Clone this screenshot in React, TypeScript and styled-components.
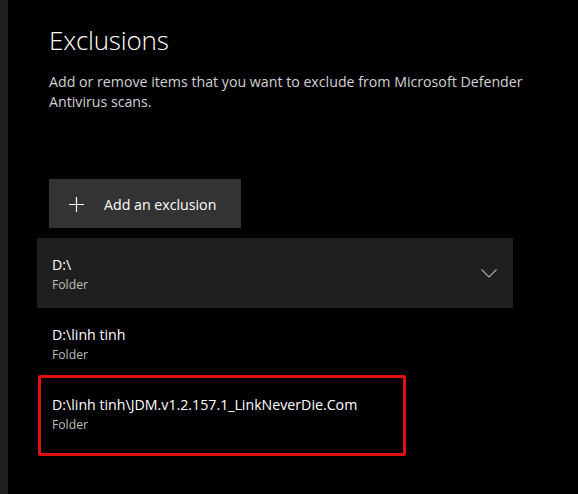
import React from "react";
import styled, { createGlobalStyle } from "styled-components";

const GlobalStyle = createGlobalStyle`
  html, body {
    margin: 0;
    padding: 0;
    background: #000000;
  }
  body {
    font-family: "Segoe UI", "Open Sans", "Noto Sans", sans-serif;
    color: #ffffff;
    -webkit-font-smoothing: antialiased;
  }
`;

const Page = styled.div`
  display: flex;
  width: 578px;
  height: 494px;
  overflow: hidden;
  background: #000000;
`;

const SideStrip = styled.div`
  flex: 0 0 8px;
  background: #1f1f1f;
`;

const Main = styled.main`
  flex: 1;
  padding: 22px 0 0 29px;
`;

const Intro = styled.section`
  padding: 0 12px;
`;

const Title = styled.h1`
  margin: 0;
  font-size: 26px;
  font-weight: 300;
  letter-spacing: -0.2px;
  line-height: 36px;
  color: #ffffff;
`;

const Description = styled.p`
  margin: 14px 0 0;
  width: 500px;
  font-size: 14.2px;
  line-height: 20px;
  color: #d2d2d2;
`;

const AddButton = styled.button`
  display: flex;
  align-items: center;
  gap: 20px;
  margin-top: 67px;
  width: 192px;
  height: 49px;
  padding: 1px 0 0 20px;
  border: none;
  background: #333333;
  color: #ffffff;
  font-family: inherit;
  font-size: 14.2px;
  cursor: pointer;
`;

const List = styled.ul`
  list-style: none;
  margin: 10px 0 0;
  padding: 0;
  width: 476px;
`;

const Row = styled.li<{ $expanded?: boolean }>`
  position: relative;
  display: flex;
  align-items: center;
  height: 70px;
  box-sizing: border-box;
  padding: 0 16px 0 15px;
  background: ${(p) => (p.$expanded ? "#1f1f1f" : "transparent")};
`;

const RowText = styled.div`
  flex: 1;
  display: flex;
  flex-direction: column;
  align-self: flex-start;
  padding-top: 17px;
`;

const Path = styled.span`
  font-size: 14.2px;
  line-height: 20px;
  color: #ffffff;
`;

const Kind = styled.span`
  font-size: 12.2px;
  line-height: 19px;
  color: #bdbdbd;
`;

const Highlight = styled.div`
  position: absolute;
  left: 1px;
  top: -3px;
  width: 368px;
  height: 81px;
  box-sizing: border-box;
  border: 3px solid #e0100f;
  border-radius: 2px;
  pointer-events: none;
`;

const PlusIcon = () => (
  <svg width="15" height="15" viewBox="0 0 15 15">
    <path d="M7.5 0v15M0 7.5h15" stroke="#ffffff" strokeWidth="1.2" fill="none" />
  </svg>
);

const ChevronIcon = () => (
  <svg width="16" height="9" viewBox="0 0 16 9">
    <path d="M0.5 0.5l7.5 7.5 7.5-7.5" stroke="#a8a8a8" strokeWidth="1.2" fill="none" />
  </svg>
);

const exclusions = [
  { path: "D:\\", kind: "Folder", expanded: true },
  { path: "D:\\linh tinh", kind: "Folder" },
  { path: "D:\\linh tinh\\JDM.v1.2.157.1_LinkNeverDie.Com", kind: "Folder", highlighted: true },
];

const App: React.FC = () => (
  <>
    <GlobalStyle />
    <Page>
      <SideStrip />
      <Main>
        <Intro>
          <Title>Exclusions</Title>
          <Description>
            Add or remove items that you want to exclude from Microsoft Defender
            Antivirus scans.
          </Description>
          <AddButton>
            <PlusIcon />
            Add an exclusion
          </AddButton>
        </Intro>
        <List>
          {exclusions.map((item) => (
            <Row key={item.path} $expanded={item.expanded}>
              <RowText>
                <Path>{item.path}</Path>
                <Kind>{item.kind}</Kind>
              </RowText>
              {item.expanded && <ChevronIcon />}
              {item.highlighted && <Highlight />}
            </Row>
          ))}
        </List>
      </Main>
    </Page>
  </>
);

export default App;
